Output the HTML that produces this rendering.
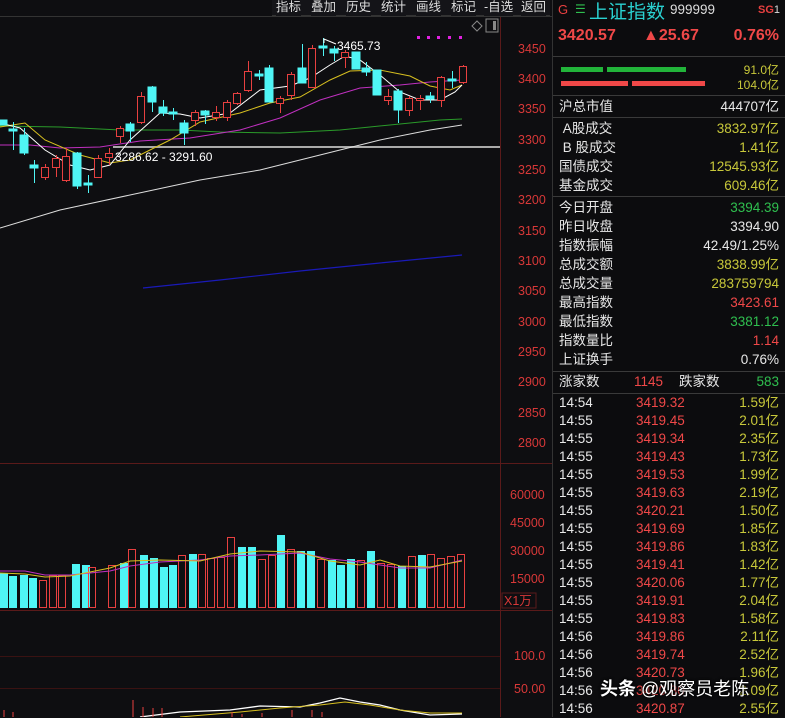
<!DOCTYPE html>
<html><head><meta charset="utf-8"><style>
*{margin:0;padding:0;box-sizing:border-box}
body{width:785px;height:717px;background:#0e0e11;overflow:hidden;position:relative;font-family:"Liberation Sans","Noto Sans CJK SC",sans-serif;color:#e8e8e8}
#chart{position:absolute;left:0;top:0}
.tb{position:absolute;top:0;height:16px;font-size:12.5px;color:#ddd;line-height:14px;background:#141418}
.rp{position:absolute;left:552px;top:0;width:233px;height:717px;background:#0c0c0e;border-left:1px solid #333}
.row{position:absolute;left:6px;right:6px;height:19px;font-size:13.5px;line-height:19px}
.row .l{position:absolute;left:0;color:#e6e6e6}
.row .r{position:absolute;right:0}
.sep{position:absolute;left:0;right:0;height:1px;background:#3a3a3a}
.g{color:#2fbf4f}.y{color:#c8c83a}.rd{color:#f04848}.w{color:#e8e8e8}
.tr{position:absolute;left:6px;right:6px;height:18px;font-size:13.5px;line-height:18px}
.tr span{position:absolute}
</style></head><body>
<svg id="chart" width="552" height="717" xmlns="http://www.w3.org/2000/svg">
<rect width="552" height="717" fill="#0e0e11"/>
<line x1="0" y1="16.5" x2="552" y2="16.5" stroke="#333"/>
<line x1="500.5" y1="17" x2="500.5" y2="717" stroke="#5a1a1a"/>
<line x1="0" y1="463.5" x2="552" y2="463.5" stroke="#5a1a1a"/>
<line x1="0" y1="610.5" x2="552" y2="610.5" stroke="#5a1a1a"/>
<line x1="0" y1="656.5" x2="500" y2="656.5" stroke="#3a1212"/>
<line x1="0" y1="688.5" x2="500" y2="688.5" stroke="#3a1212"/>
<g fill="#d83838" font-size="12.5" font-family="Liberation Sans,sans-serif">
<text x="518" y="53">3450</text><text x="518" y="83">3400</text><text x="518" y="113">3350</text><text x="518" y="144">3300</text><text x="518" y="174">3250</text><text x="518" y="204">3200</text><text x="518" y="235">3150</text><text x="518" y="265">3100</text><text x="518" y="295">3050</text><text x="518" y="326">3000</text><text x="518" y="356">2950</text><text x="518" y="386">2900</text><text x="518" y="417">2850</text><text x="518" y="447">2800</text>
<text x="510" y="499">60000</text><text x="510" y="527">45000</text><text x="510" y="555">30000</text><text x="510" y="583">15000</text>
<text x="514" y="660">100.0</text><text x="514" y="693">50.00</text>
</g>
<rect x="502" y="593" width="34" height="15" fill="none" stroke="#5a1a1a"/>
<text x="504" y="605" fill="#d83838" font-size="12.5" font-family="Liberation Sans,Noto Sans CJK SC,sans-serif">X1万</text>
<line x1="113" y1="147" x2="500" y2="147" stroke="#aaa" stroke-width="2"/>
<polyline fill="none" stroke="#ddd" stroke-width="1" points="0,228 60,210 130,195 200,180 260,170 320,155 380,140 430,130 462,125"/>
<polyline fill="none" stroke="#2a9a2a" stroke-width="1" points="0,126 60,127 120,130 180,130 220,132 280,133 340,130 400,124 440,120 462,119"/>
<polyline fill="none" stroke="#1a1ab8" stroke-width="1.2" points="143,288 220,280 300,271 380,263 462,255"/>
<polyline fill="none" stroke="#c030c0" stroke-width="1" points="0,145 30,145 60,148 100,147 140,141 190,138 240,130 280,118 320,100 360,88 400,85 430,82 462,80"/>
<polyline fill="none" stroke="#d8c020" stroke-width="1" points="0,127 25,123 45,140 80,155 110,163 130,160 170,140 200,122 240,113 270,103 300,97 330,80 350,71 380,70 410,76 430,86 450,90 462,85"/>
<polyline fill="none" stroke="#fff" stroke-width="1" points="0,123 20,128 45,150 70,165 90,170 110,165 130,140 160,113 180,114 200,118 230,113 260,90 290,86 310,78 330,65 345,56 360,60 380,75 400,92 420,100 440,100 455,92 462,85"/>
<g stroke="#4ff5f5" fill="#4ff5f5">
<rect x="-1" y="120" width="8" height="5"/>
<line x1="13.5" y1="122" x2="13.5" y2="150"/><rect x="9" y="129" width="8" height="2"/>
<line x1="24.5" y1="128" x2="24.5" y2="155"/><rect x="20" y="135" width="8" height="18"/>
<line x1="34.5" y1="160" x2="34.5" y2="183"/><rect x="30" y="165" width="8" height="3"/>
<line x1="77.5" y1="152" x2="77.5" y2="189"/><rect x="73" y="153" width="8" height="33"/>
<line x1="88.5" y1="175" x2="88.5" y2="193"/><rect x="84" y="183" width="8" height="2"/>
<line x1="130.5" y1="122" x2="130.5" y2="142"/><rect x="126" y="124" width="8" height="7"/>
<line x1="152.5" y1="86" x2="152.5" y2="112"/><rect x="148" y="87" width="8" height="15"/>
<line x1="163.5" y1="100" x2="163.5" y2="116"/><rect x="159" y="107" width="8" height="6"/>
<line x1="173.5" y1="108" x2="173.5" y2="120"/><rect x="169" y="112" width="8" height="2"/>
<line x1="184.5" y1="120" x2="184.5" y2="145"/><rect x="180" y="123" width="8" height="10"/>
<line x1="205.5" y1="110" x2="205.5" y2="124"/><rect x="201" y="111" width="8" height="4"/>
<line x1="259.5" y1="70" x2="259.5" y2="80"/><rect x="255" y="74" width="8" height="2"/>
<line x1="269.5" y1="65" x2="269.5" y2="102"/><rect x="265" y="68" width="8" height="34"/>
<line x1="302.5" y1="44" x2="302.5" y2="83"/><rect x="298" y="68" width="8" height="15"/>
<line x1="323.5" y1="38" x2="323.5" y2="56"/><rect x="319" y="46" width="8" height="2"/>
<line x1="334.5" y1="46" x2="334.5" y2="61"/><rect x="330" y="49" width="8" height="4"/>
<rect x="352" y="52" width="8" height="17"/>
<line x1="366.5" y1="62" x2="366.5" y2="76"/><rect x="362" y="68" width="8" height="4"/>
<rect x="373" y="70" width="8" height="25"/>
<line x1="398.5" y1="89" x2="398.5" y2="123"/><rect x="394" y="91" width="8" height="19"/>
<line x1="430.5" y1="92" x2="430.5" y2="103"/><rect x="426" y="96" width="8" height="3"/>
<line x1="452.5" y1="71" x2="452.5" y2="88"/><rect x="448" y="79" width="8" height="2"/>
</g>
<g stroke="#e84040" fill="#0e0e11">
<line x1="45.5" y1="164" x2="45.5" y2="180"/><rect x="41.5" y="167.5" width="7" height="10"/>
<line x1="56.5" y1="155" x2="56.5" y2="177"/><rect x="52.5" y="158.5" width="7" height="9"/>
<line x1="66.5" y1="148" x2="66.5" y2="182"/><rect x="62.5" y="156.5" width="7" height="24"/>
<line x1="98.5" y1="155" x2="98.5" y2="177"/><rect x="94.5" y="158.5" width="7" height="19"/>
<line x1="109.5" y1="148" x2="109.5" y2="165"/><rect x="105.5" y="153.5" width="7" height="4"/>
<line x1="120.5" y1="126" x2="120.5" y2="143"/><rect x="116.5" y="128.5" width="7" height="8"/>
<line x1="141.5" y1="92" x2="141.5" y2="124"/><rect x="137.5" y="96.5" width="7" height="26"/>
<line x1="195.5" y1="110" x2="195.5" y2="126"/><rect x="191.5" y="112.5" width="7" height="8"/>
<line x1="216.5" y1="106" x2="216.5" y2="121"/><rect x="212.5" y="112.5" width="7" height="5"/>
<line x1="227.5" y1="100" x2="227.5" y2="121"/><rect x="223.5" y="102.5" width="7" height="15"/>
<line x1="237.5" y1="92" x2="237.5" y2="105"/><rect x="233.5" y="93.5" width="7" height="10"/>
<line x1="248.5" y1="61" x2="248.5" y2="92"/><rect x="244.5" y="71.5" width="7" height="19"/>
<line x1="280.5" y1="96" x2="280.5" y2="113"/><rect x="276.5" y="98.5" width="7" height="5"/>
<line x1="291.5" y1="72" x2="291.5" y2="100"/><rect x="287.5" y="74.5" width="7" height="21"/>
<line x1="312.5" y1="45" x2="312.5" y2="88"/><rect x="308.5" y="48.5" width="7" height="39"/>
<line x1="345.5" y1="50" x2="345.5" y2="68"/><rect x="341.5" y="52.5" width="7" height="5"/>
<line x1="388.5" y1="89" x2="388.5" y2="105"/><rect x="384.5" y="96.5" width="7" height="4"/>
<line x1="409.5" y1="96" x2="409.5" y2="116"/><rect x="405.5" y="98.5" width="7" height="12"/>
<line x1="420.5" y1="95" x2="420.5" y2="110"/><rect x="416.5" y="98.5" width="7" height="2"/>
<line x1="441.5" y1="76" x2="441.5" y2="107"/><rect x="437.5" y="77.5" width="7" height="23"/>
<line x1="463.5" y1="65" x2="463.5" y2="84"/><rect x="459.5" y="66.5" width="7" height="16"/>
</g>
<g fill="#fff" font-size="12" font-family="Liberation Sans,sans-serif">
<text x="337" y="50">3465.73</text>
<text x="115" y="161">3286.62 - 3291.60</text>
</g>
<polyline points="324,43 324,39 336,44" fill="none" stroke="#fff"/>
<g fill="#e020e0"><rect x="417" y="36" width="3" height="3"/><rect x="427" y="36" width="3" height="3"/><rect x="437" y="36" width="3" height="3"/><rect x="448" y="36" width="3" height="3"/><rect x="459" y="36" width="3" height="3"/></g>
<path d="M472 26 l5 -5 l5 5 l-5 5 z" fill="none" stroke="#888"/>
<rect x="486" y="19" width="12" height="13" fill="none" stroke="#888"/><rect x="493" y="21" width="3" height="9" fill="#888"/>
<g fill="#4ff5f5">
<rect x="0" y="573" width="8" height="35"/><rect x="9" y="576" width="8" height="32"/><rect x="20" y="575" width="8" height="33"/><rect x="29" y="578" width="8" height="30"/>
<rect x="72" y="564" width="8" height="44"/><rect x="82" y="565" width="8" height="43"/><rect x="120" y="563" width="8" height="45"/><rect x="140" y="555" width="8" height="53"/><rect x="150" y="558" width="8" height="50"/><rect x="160" y="567" width="8" height="41"/><rect x="169" y="565" width="8" height="43"/><rect x="189" y="554" width="8" height="54"/><rect x="238" y="547" width="8" height="61"/><rect x="248" y="547" width="8" height="61"/><rect x="277" y="535" width="8" height="73"/><rect x="297" y="551" width="8" height="57"/><rect x="307" y="551" width="8" height="57"/><rect x="328" y="560" width="8" height="48"/><rect x="337" y="565" width="8" height="43"/><rect x="347" y="559" width="8" height="49"/><rect x="367" y="551" width="8" height="57"/><rect x="398" y="566" width="8" height="42"/><rect x="418" y="555" width="8" height="53"/>
</g>
<g fill="none" stroke="#e84040">
<rect x="39.5" y="580.5" width="7" height="27"/><rect x="49.5" y="575.5" width="7" height="32"/><rect x="58.5" y="575.5" width="7" height="32"/><rect x="88.5" y="567.5" width="7" height="40"/><rect x="108.5" y="565.5" width="7" height="42"/><rect x="128.5" y="549.5" width="7" height="58"/><rect x="178.5" y="555.5" width="7" height="52"/><rect x="198.5" y="554.5" width="7" height="53"/><rect x="207.5" y="558.5" width="7" height="49"/><rect x="217.5" y="557.5" width="7" height="50"/><rect x="227.5" y="537.5" width="7" height="70"/><rect x="258.5" y="559.5" width="7" height="48"/><rect x="268.5" y="555.5" width="7" height="52"/><rect x="287.5" y="549.5" width="7" height="58"/><rect x="317.5" y="559.5" width="7" height="48"/><rect x="357.5" y="560.5" width="7" height="47"/><rect x="377.5" y="563.5" width="7" height="44"/><rect x="387.5" y="564.5" width="7" height="43"/><rect x="408.5" y="556.5" width="7" height="51"/><rect x="427.5" y="554.5" width="7" height="53"/><rect x="457.5" y="554.5" width="7" height="53"/><rect x="447.5" y="556.5" width="7" height="51"/><rect x="437.5" y="558.5" width="7" height="49"/>
</g>
<polyline fill="none" stroke="#c030c0" points="0,571 25,571 45,575 70,575 110,571 130,566 160,562 200,560 230,556 260,555 300,553 330,559 360,562 380,565 400,568 430,568 462,560"/>
<polyline fill="none" stroke="#d8c020" points="0,573 25,574 45,577 70,576 110,568 130,561 160,560 200,561 230,554 260,551 300,552 330,561 360,565 380,560 400,566 430,567 462,561"/>
<polyline fill="none" stroke="#fff" stroke-width="1.3" points="140,717 180,712 230,710 260,706 300,707 320,703 340,698 360,702 380,705 400,710 430,715 462,714"/>
<polyline fill="none" stroke="#d8c020" points="180,717 240,712 280,708 320,705 345,702 370,705 400,710 430,713 462,713"/>
<g stroke="#e84040"><line x1="4" y1="710" x2="4" y2="717"/><line x1="13" y1="712" x2="13" y2="717"/><line x1="133" y1="700" x2="133" y2="717"/><line x1="143" y1="707" x2="143" y2="717"/><line x1="153" y1="708" x2="153" y2="717"/><line x1="162" y1="708" x2="162" y2="717"/><line x1="232" y1="712" x2="232" y2="717"/><line x1="242" y1="714" x2="242" y2="717"/><line x1="262" y1="713" x2="262" y2="717"/><line x1="292" y1="710" x2="292" y2="717"/><line x1="312" y1="710" x2="312" y2="717"/><line x1="322" y1="712" x2="322" y2="717"/></g>
</svg>
<div class="tb" style="left:272px;width:278px;border-bottom:1px solid #333"></div>
<div class="tb" style="left:276px">指标</div>
<div class="tb" style="left:311px">叠加</div>
<div class="tb" style="left:346px">历史</div>
<div class="tb" style="left:381px">统计</div>
<div class="tb" style="left:416px">画线</div>
<div class="tb" style="left:451px">标记</div>
<div class="tb" style="left:484px">-自选</div>
<div class="tb" style="left:521px">返回</div>
<div class="rp">
<div style="position:absolute;left:5px;top:2px;font-size:13px;color:#e84040">G</div>
<div style="position:absolute;left:22px;top:2px;font-size:12px;color:#2fbf4f">☰</div>
<div style="position:absolute;left:36px;top:-3px;font-size:19px;color:#2ad0d0">上证指数</div>
<div style="position:absolute;left:117px;top:2px;font-size:13.5px;color:#ddd">999999</div>
<div style="position:absolute;left:205px;top:4px;font-size:11px;color:#e84040;font-weight:bold">SG<span style="color:#ddd;font-weight:normal">1</span></div>
<div style="position:absolute;left:5px;top:27px;font-size:16px;color:#f04848;font-weight:bold">3420.57</div>
<div style="position:absolute;left:90px;top:27px;font-size:16px;color:#f04848;font-weight:bold">▲25.67</div>
<div style="position:absolute;right:6px;top:27px;font-size:16px;color:#f04848;font-weight:bold">0.76%</div>
<div class="sep" style="top:56px"></div>
<div style="position:absolute;left:8px;top:67px;width:42px;height:5px;background:#22b43a"></div>
<div style="position:absolute;left:54px;top:67px;width:79px;height:5px;background:#22b43a"></div>
<div style="position:absolute;left:8px;top:81px;width:67px;height:5px;background:#f04848"></div>
<div style="position:absolute;left:79px;top:81px;width:73px;height:5px;background:#f04848"></div>
<div style="position:absolute;right:6px;top:61px;font-size:12px;color:#c8c83a">91.0亿</div>
<div style="position:absolute;right:6px;top:76px;font-size:12px;color:#c8c83a">104.0亿</div>
<div class="sep" style="top:95px"></div>
<div class="row" style="top:97px"><span class="l">沪总市值</span><span class="r w">444707亿</span></div>
<div class="sep" style="top:117px"></div>
<div class="row" style="top:119px"><span class="l">&nbsp;A股成交</span><span class="r y">3832.97亿</span></div>
<div class="row" style="top:138px"><span class="l">&nbsp;B 股成交</span><span class="r y">1.41亿</span></div>
<div class="row" style="top:157px"><span class="l">国债成交</span><span class="r y">12545.93亿</span></div>
<div class="row" style="top:176px"><span class="l">基金成交</span><span class="r y">609.46亿</span></div>
<div class="sep" style="top:196px"></div>
<div class="row" style="top:198px"><span class="l">今日开盘</span><span class="r g">3394.39</span></div>
<div class="row" style="top:217px"><span class="l">昨日收盘</span><span class="r w">3394.90</span></div>
<div class="row" style="top:236px"><span class="l">指数振幅</span><span class="r w">42.49/1.25%</span></div>
<div class="row" style="top:255px"><span class="l">总成交额</span><span class="r y">3838.99亿</span></div>
<div class="row" style="top:274px"><span class="l">总成交量</span><span class="r y">283759794</span></div>
<div class="row" style="top:293px"><span class="l">最高指数</span><span class="r rd">3423.61</span></div>
<div class="row" style="top:312px"><span class="l">最低指数</span><span class="r g">3381.12</span></div>
<div class="row" style="top:331px"><span class="l">指数量比</span><span class="r rd">1.14</span></div>
<div class="row" style="top:350px"><span class="l">上证换手</span><span class="r w">0.76%</span></div>
<div class="sep" style="top:371px"></div>
<div class="row" style="top:372px"><span class="l">涨家数</span><span style="position:absolute;left:75px" class="rd">1145</span><span style="position:absolute;left:120px;color:#e6e6e6">跌家数</span><span class="r g">583</span></div>
<div class="sep" style="top:393px"></div>
<div class="tr" style="top:394px"><span class="w" style="left:0">14:54</span><span class="rd" style="left:77px">3419.32</span><span class="y" style="right:0">1.59亿</span></div>
<div class="tr" style="top:412px"><span class="w" style="left:0">14:55</span><span class="rd" style="left:77px">3419.45</span><span class="y" style="right:0">2.01亿</span></div>
<div class="tr" style="top:430px"><span class="w" style="left:0">14:55</span><span class="rd" style="left:77px">3419.34</span><span class="y" style="right:0">2.35亿</span></div>
<div class="tr" style="top:448px"><span class="w" style="left:0">14:55</span><span class="rd" style="left:77px">3419.43</span><span class="y" style="right:0">1.73亿</span></div>
<div class="tr" style="top:466px"><span class="w" style="left:0">14:55</span><span class="rd" style="left:77px">3419.53</span><span class="y" style="right:0">1.99亿</span></div>
<div class="tr" style="top:484px"><span class="w" style="left:0">14:55</span><span class="rd" style="left:77px">3419.63</span><span class="y" style="right:0">2.19亿</span></div>
<div class="tr" style="top:502px"><span class="w" style="left:0">14:55</span><span class="rd" style="left:77px">3420.21</span><span class="y" style="right:0">1.50亿</span></div>
<div class="tr" style="top:520px"><span class="w" style="left:0">14:55</span><span class="rd" style="left:77px">3419.69</span><span class="y" style="right:0">1.85亿</span></div>
<div class="tr" style="top:538px"><span class="w" style="left:0">14:55</span><span class="rd" style="left:77px">3419.86</span><span class="y" style="right:0">1.83亿</span></div>
<div class="tr" style="top:556px"><span class="w" style="left:0">14:55</span><span class="rd" style="left:77px">3419.41</span><span class="y" style="right:0">1.42亿</span></div>
<div class="tr" style="top:574px"><span class="w" style="left:0">14:55</span><span class="rd" style="left:77px">3420.06</span><span class="y" style="right:0">1.77亿</span></div>
<div class="tr" style="top:592px"><span class="w" style="left:0">14:55</span><span class="rd" style="left:77px">3419.91</span><span class="y" style="right:0">2.04亿</span></div>
<div class="tr" style="top:610px"><span class="w" style="left:0">14:55</span><span class="rd" style="left:77px">3419.83</span><span class="y" style="right:0">1.58亿</span></div>
<div class="tr" style="top:628px"><span class="w" style="left:0">14:56</span><span class="rd" style="left:77px">3419.86</span><span class="y" style="right:0">2.11亿</span></div>
<div class="tr" style="top:646px"><span class="w" style="left:0">14:56</span><span class="rd" style="left:77px">3419.74</span><span class="y" style="right:0">2.52亿</span></div>
<div class="tr" style="top:664px"><span class="w" style="left:0">14:56</span><span class="rd" style="left:77px">3420.73</span><span class="y" style="right:0">1.96亿</span></div>
<div class="tr" style="top:682px"><span class="w" style="left:0">14:56</span><span class="rd" style="left:77px">3420.80</span><span class="y" style="right:0">2.09亿</span></div>
<div class="tr" style="top:700px"><span class="w" style="left:0">14:56</span><span class="rd" style="left:77px">3420.87</span><span class="y" style="right:0">2.55亿</span></div>
</div>
<div style="position:absolute;left:600px;top:675px;font-size:18px;color:#fff;text-shadow:0 0 3px #000,0 0 2px #000"><b>头条</b> @观察员老陈</div>
</body></html>
